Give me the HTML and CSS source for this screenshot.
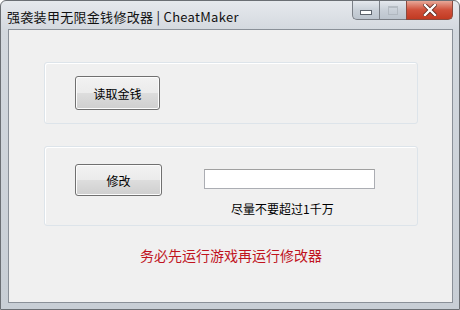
FILE: index.html
```html
<!DOCTYPE html>
<html lang="zh-CN">
<head>
    <meta charset="UTF-8">
    <title>强袭装甲无限金钱修改器 | CheatMaker</title>
    <link rel="stylesheet" href="styles.css">
</head>
<body>
    <div class="window">
        <div class="titlebar">
            <span class="title">强袭装甲无限金钱修改器 | CheatMaker</span>
            <div class="caption-buttons">
                <div class="cap-btn cap-min"><span class="min-bar"></span></div>
                <div class="cap-btn cap-max"><span class="max-box"></span></div>
                <div class="cap-btn cap-close">
                    <svg width="14" height="12" viewBox="0 0 14 12">
                        <path d="M2 1 L12 11 M12 1 L2 11" stroke="#5a2a22" stroke-width="4" stroke-linecap="square"/>
                        <path d="M2 1 L12 11 M12 1 L2 11" stroke="#ffffff" stroke-width="2.4" stroke-linecap="square"/>
                    </svg>
                </div>
            </div>
        </div>
        <div class="client">
            <div class="group group-read">
                <button class="win-btn btn-read">读取金钱</button>
            </div>
            <div class="group group-edit">
                <button class="win-btn btn-edit">修改</button>
                <div class="edit-side">
                    <input class="money-input" type="text">
                    <div class="hint">尽量不要超过1千万</div>
                </div>
            </div>
            <div class="warning">务必先运行游戏再运行修改器</div>
        </div>
    </div>
</body>
</html>
```

FILE: styles.css
```css
body {
    margin: 0;
    background: #ffffff;
    font-family: "Noto Sans CJK SC", "DejaVu Sans", sans-serif;
}
.window {
    width: 460px;
    height: 310px;
    box-sizing: border-box;
    border: 1px solid #6b6f74;
    border-radius: 6px 6px 0 0;
    background: linear-gradient(to bottom, #e6e9ed 0px, #d3d8de 30px, #c8ced5 100%);
    display: flex;
    flex-direction: column;
}
.titlebar {
    height: 28px;
    display: flex;
    justify-content: space-between;
    align-items: flex-start;
}
.title {
    font-size: 13px;
    color: #111;
    padding: 6px 0 0 6px;
    letter-spacing: 0.3px;
}
.caption-buttons {
    display: flex;
    margin-right: 6px;
}
.cap-btn {
    height: 19px;
    border: 1px solid #7a7f86;
    border-top: none;
    display: flex;
    align-items: center;
    justify-content: center;
    box-sizing: border-box;
}
.cap-min {
    width: 27px;
    border-radius: 0 0 0 5px;
    border-right: none;
    background: linear-gradient(to bottom, #e4e8ed, #c9d0d8 50%, #bcc4cd);
}
.cap-max {
    width: 27px;
    border-right: none;
    background: linear-gradient(to bottom, #e4e8ed, #c9d0d8 50%, #bcc4cd);
}
.cap-close {
    width: 47px;
    border-radius: 0 0 5px 0;
    border-color: #8a4a3e;
    background: linear-gradient(to bottom, #e8a898, #d0503a 50%, #c23a22);
}
.min-bar {
    width: 10px;
    height: 3px;
    background: #fff;
    border: 1px solid #5d646c;
    margin-top: 5px;
}
.max-box {
    width: 8px;
    height: 6px;
    border: 1px solid #a9b0b8;
    border-top-width: 2px;
    opacity: 0.7;
}
.client {
    flex: 1;
    margin: 0 6px 6px 7px;
    background: #f0f0f0;
    border: 1px solid #8a9098;
    display: flex;
    flex-direction: column;
    padding: 32px 0 0 35px;
}
.group {
    width: 374px;
    box-sizing: border-box;
    border: 1px solid #dde4ea;
    border-radius: 3px;
    box-shadow: inset 1px 1px 0 #ffffff;
    display: flex;
}
.group-read {
    height: 62px;
    padding: 13px 0 0 30px;
}
.group-edit {
    height: 80px;
    margin-top: 22px;
    padding: 17px 0 0 30px;
}
.win-btn {
    font-family: inherit;
    font-size: 12px;
    color: #000;
    border: 1px solid #707070;
    border-radius: 3px;
    background: linear-gradient(to bottom, #f2f2f2 0%, #ebebeb 50%, #dddddd 51%, #cfcfcf 100%);
    box-shadow: inset 0 0 0 1px #fcfcfc;
    padding: 0;
}
.btn-read {
    width: 85px;
    height: 34px;
}
.btn-edit {
    width: 87px;
    height: 32px;
}
.edit-side {
    margin-left: 42px;
    display: flex;
    flex-direction: column;
    align-items: flex-start;
    padding-top: 5px;
}
.money-input {
    width: 171px;
    height: 20px;
    box-sizing: border-box;
    border: 1px solid #abadb3;
    border-top-color: #a0a0a0;
    background: #fff;
    margin: 0;
}
.hint {
    font-size: 12px;
    color: #000;
    margin: 12px 0 0 27px;
    line-height: 16px;
}
.warning {
    width: 374px;
    text-align: center;
    color: #c0141e;
    font-size: 14px;
    margin-top: 19px;
    line-height: 20px;
}
```
